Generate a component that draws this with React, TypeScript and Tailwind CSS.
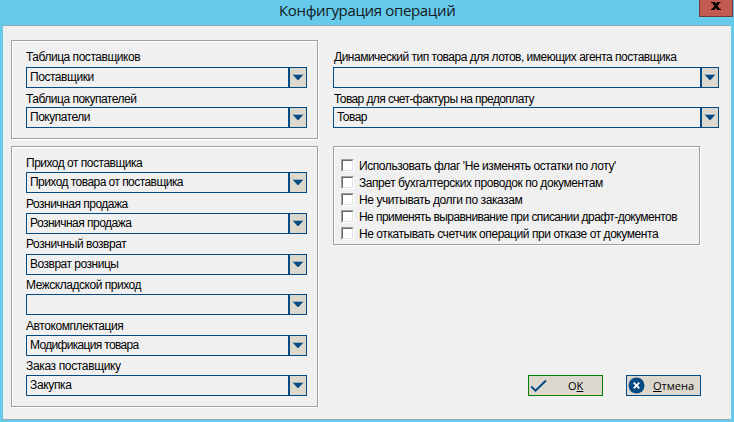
import React from 'react';

const ui = "font-['Liberation_Sans',Arial,sans-serif] text-[12px] leading-[14px] whitespace-pre text-black";

function Combo({ value = '', tracking = 'tracking-normal' }: { value?: string; tracking?: string }) {
  return (
    <div className="flex h-[21px] w-full border border-[#044b83] bg-[#f0f0f0]">
      <div className={`flex-1 pl-[3px] pt-[2px] ${ui} ${tracking}`}>{value}</div>
      <div className="flex w-[18px] shrink-0 items-start justify-center border-l-2 border-[#044b83] bg-[#dcd8ce] pt-[6px]">
        <svg width="12" height="7" viewBox="0 0 12 7">
          <rect x="0.5" y="0" width="11" height="1" fill="#9eb0ba" />
          <path d="M1 1H11L6.5 6H5.5Z" fill="#044b83" />
        </svg>
      </div>
    </div>
  );
}

function Field({ label, value, tracking, valueTracking, className }: { label: string; value?: string; tracking: string; valueTracking?: string; className: string }) {
  return (
    <div className={`flex flex-col justify-between ${className}`}>
      <div className={`${ui} ${tracking}`}>{label}</div>
      <Combo value={value} tracking={valueTracking} />
    </div>
  );
}

function Group({ className, children }: { className: string; children: React.ReactNode }) {
  return (
    <fieldset className={`min-w-0 border border-[#a0a0a0] shadow-[1px_1px_0_#fff,inset_1px_1px_0_#fff] ${className}`}>
      {children}
    </fieldset>
  );
}

function Check({ label, tracking }: { label: string; tracking: string }) {
  return (
    <label className="flex h-[17px] items-start">
      <span className="mr-[5px] h-[13px] w-[13px] shrink-0 border border-t-[#a0a0a0] border-l-[#a0a0a0] border-r-white border-b-white">
        <span className="block h-[11px] w-[11px] border border-t-[#696969] border-l-[#696969] border-r-[#e3e3e3] border-b-[#e3e3e3] bg-white" />
      </span>
      <span className={`${ui} ${tracking}`}>{label}</span>
    </label>
  );
}

export default function App() {
  return (
    <div className="flex h-[422px] w-[734px] flex-col overflow-hidden bg-[#66caea]">
      <header className="flex h-[25px] shrink-0 items-start">
        <h1 className="flex-1 pl-[279px] font-['Open_Sans','Noto_Sans',sans-serif] text-[15px] leading-[20px] tracking-[-0.33px] whitespace-pre text-[#14191c]">Конфигурация операций</h1>
        <button className="mr-px flex h-[17px] w-[34px] items-start justify-center border border-t-0 border-[#6d3b38] bg-[#c25a50]">
          <svg width="10" height="8" viewBox="0 0 10 8" className="mt-[2px]">
            <path d="M0 0H4L5 2L6.2 0H9.5V1H8.7L6.6 4L8.9 7H10V8H6L4.8 5.8L3.5 8H0V7H.9L3.3 4L1.2 1H0Z" fill="#000" />
          </svg>
        </button>
      </header>
      <main className="mx-[3px] flex h-[395px] w-[728px] shrink-0 border-t border-b border-[#8cabb7] bg-[#f0f0f0] pt-[14px] pl-[8px]">
        <div className="w-[307px] shrink-0">
          <Group className="h-[99px] w-[307px] pt-[9px] pl-[14px]">
            <Field className="h-[38px] w-[281px]" label="Таблица поставщиков" tracking="tracking-[-0.47px]" value="Поставщики" valueTracking="tracking-[-0.45px]" />
            <Field className="mt-[4px] h-[36px] w-[281px]" label="Таблица покупателей" tracking="tracking-[-0.5px]" value="Покупатели" valueTracking="tracking-[-0.5px]" />
          </Group>
          <Group className="mt-[7px] h-[261px] w-[307px] pt-[9px] pl-[14px]">
            <Field className="h-[37px] w-[281px]" label="Приход от поставщика" tracking="tracking-[-0.5px]" value="Приход товара от поставщика" valueTracking="tracking-[-0.55px]" />
            <Field className="mt-[4px] h-[37px] w-[281px]" label="Розничная продажа" tracking="tracking-[-0.5px]" value="Розничная продажа" valueTracking="tracking-[-0.52px]" />
            <Field className="mt-[3px] h-[38px] w-[281px]" label="Розничный возврат" tracking="tracking-[-0.43px]" value="Возврат розницы" valueTracking="tracking-[-0.5px]" />
            <Field className="mt-[3px] h-[37px] w-[281px]" label="Межскладской приход" tracking="tracking-[-0.47px]" />
            <Field className="mt-[4px] h-[37px] w-[281px]" label="Автокомплектация" tracking="tracking-[-0.42px]" value="Модификация товара" valueTracking="tracking-[-0.68px]" />
            <Field className="mt-[3px] h-[37px] w-[281px]" label="Заказ поставщику" tracking="tracking-[-0.35px]" value="Закупка" valueTracking="tracking-[-0.35px]" />
          </Group>
        </div>
        <div className="ml-[15px] w-[386px]">
          <Field className="mt-[10px] h-[38px] w-[386px]" label="Динамический тип товара для лотов, имеющих агента поставщика" tracking="pl-px tracking-[-0.5px]" />
          <Field className="mt-[4px] h-[36px] w-[386px]" label="Товар для счет-фактуры на предоплату" tracking="pl-px tracking-[-0.59px]" value="Товар" valueTracking="tracking-[-0.55px]" />
          <Group className="mt-[18px] h-[99px] w-[367px] pt-[12px] pl-[7px]">
            <Check label="Использовать флаг 'Не изменять остатки по лоту'" tracking="tracking-[-0.43px]" />
            <Check label="Запрет бухгалтерских проводок по документам" tracking="tracking-[-0.44px]" />
            <Check label="Не учитывать долги по заказам" tracking="tracking-[-0.42px]" />
            <Check label="Не применять выравнивание при списании драфт-документов" tracking="tracking-[-0.56px]" />
            <Check label="Не откатывать счетчик операций при отказе от документа" tracking="tracking-[-0.44px]" />
          </Group>
          <div className="mt-[130px] ml-[195px] flex gap-[23px]">
            <button className="flex h-[21px] w-[75px] items-start border border-[#008000] bg-[#dcd8ce]">
              <svg width="18" height="19" viewBox="0 0 18 19" className="shrink-0">
                <path d="M2.2 10.5L6.5 14.7L17 4.5" fill="none" stroke="#044b83" strokeWidth="2" />
              </svg>
              <span className="ml-[21px] mt-[2px] font-['Open_Sans',sans-serif] text-[11px] leading-[16px] text-black">O<u>K</u></span>
            </button>
            <button className="flex h-[21px] w-[75px] items-start border border-[#044b83] bg-[#dcd8ce]">
              <svg width="18" height="19" viewBox="0 0 18 19" className="shrink-0">
                <circle cx="9.5" cy="9.5" r="8" fill="#044b83" />
                <path d="M6.7 6.7L12.3 12.3M12.3 6.7L6.7 12.3" stroke="#fff" strokeWidth="1.8" />
              </svg>
              <span className="ml-[8px] mt-[2px] font-['Open_Sans',sans-serif] text-[11px] leading-[16px] text-black"><u>О</u>тмена</span>
            </button>
          </div>
        </div>
      </main>
    </div>
  );
}
